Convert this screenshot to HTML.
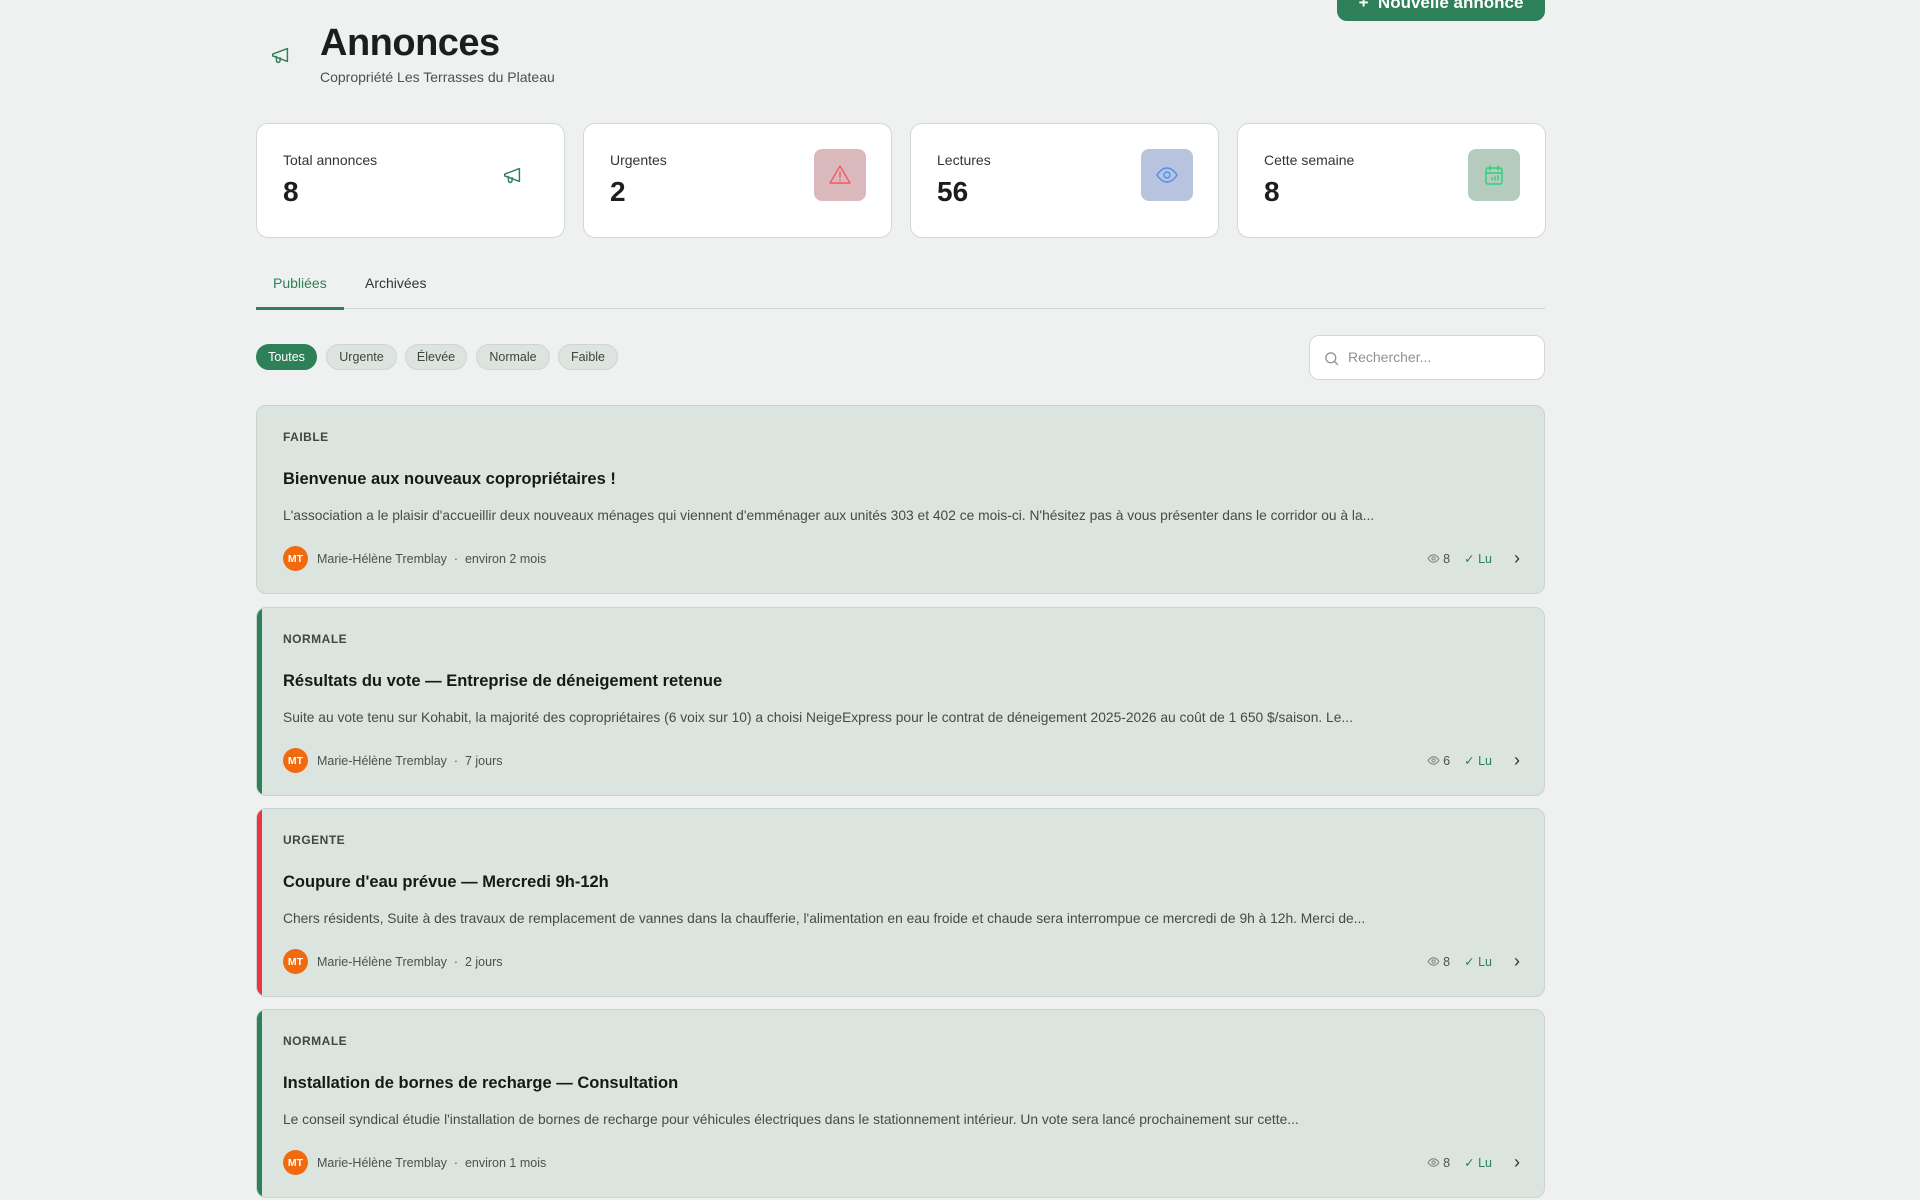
<!DOCTYPE html>
<html><head><meta charset="utf-8"><style>
*{box-sizing:border-box;margin:0;padding:0}
body{width:1920px;height:1200px;overflow:hidden;background:#eff1f0;font-family:"Liberation Sans",sans-serif;color:#1a1f1c;position:relative}
.abs{position:absolute}
.btn{left:1337px;top:-20px;width:208px;height:41px;background:#2e8059;border-radius:10px;color:#fff;font-weight:bold;font-size:17px;display:flex;align-items:flex-end;justify-content:center;padding-bottom:8px}
h1{position:absolute;left:320px;top:22px;font-size:38px;font-weight:bold;letter-spacing:-0.5px}
.sub{left:320px;top:69px;font-size:14px;color:#4a524d}
.card{position:absolute;top:123px;width:309px;height:115px;background:#fff;border:1px solid #d3d8d5;border-radius:12px}
.card .l{position:absolute;left:26px;top:28px;font-size:14px;color:#2f3632}
.card .n{position:absolute;left:26px;top:52px;font-size:28px;font-weight:bold}
.card .ic{position:absolute;left:230px;top:25px;width:52px;height:52px;border-radius:8px;display:flex;align-items:center;justify-content:center}
.tabs{left:256px;top:308px;width:1289px;height:1px;background:#cfd5d2}
.tab{top:275px;font-size:14px}
.chip{top:344px;height:26px;border-radius:13px;background:#dde3df;border:1px solid #cfd6d2;font-size:12.5px;color:#3d4540;display:flex;align-items:center;justify-content:center}
.search{position:absolute;left:1309px;top:335px;width:236px;height:45px;background:#fff;border:1px solid #d3d8d5;border-radius:10px}
.ann{position:absolute;left:256px;width:1289px;height:189px;background:#dce4df;border:1px solid #cbd3ce;border-radius:10px;overflow:hidden}
.ann .bar{position:absolute;left:0;top:0;bottom:0;width:5px}
.ann .p{position:absolute;left:26px;top:24px;font-size:12px;letter-spacing:.5px;color:#3f4742;font-weight:bold}
.ann .t{position:absolute;left:26px;top:64px;font-size:16.5px;font-weight:bold;color:#151a17}
.ann .e{position:absolute;left:26px;top:102px;font-size:13.8px;color:#444c47;white-space:nowrap}
.ann .m{position:absolute;left:26px;top:140px;display:flex;align-items:center;font-size:12.5px;color:#4a524d}
.av{width:25px;height:25px;border-radius:50%;background:#f26a0f;color:#fff;font-size:10.5px;font-weight:bold;display:flex;align-items:center;justify-content:center;margin-right:9px}
.ann .r{position:absolute;right:24px;top:140px;height:25px;display:flex;align-items:center;font-size:12.5px;color:#4a524d}
</style></head><body>
<div class="abs btn">+&nbsp; Nouvelle annonce</div>
<svg class="abs" style="left:270px;top:44px" width="22" height="22" viewBox="0 0 24 24" fill="none" stroke="#2e8059" stroke-width="1.6" stroke-linecap="round" stroke-linejoin="round"><path d="M3 11l16-6v14L3 13z"/><path d="M3 11v2"/><path d="M7 13.5V18a2 2 0 0 0 4 0v-3"/></svg>
<h1>Annonces</h1>
<div class="abs sub">Copropriété Les Terrasses du Plateau</div>

<div class="card" style="left:256px"><div class="l">Total annonces</div><div class="n">8</div><div class="ic"><svg width="22" height="22" viewBox="0 0 24 24" fill="none" stroke="#2e8059" stroke-width="1.6" stroke-linecap="round" stroke-linejoin="round"><path d="M3 11l16-6v14L3 13z"/><path d="M7 13.5V18a2 2 0 0 0 4 0v-3"/></svg></div></div>
<div class="card" style="left:583px"><div class="l">Urgentes</div><div class="n">2</div><div class="ic" style="background:#dbb8bb"><svg width="24" height="24" viewBox="0 0 24 24" fill="none" stroke="#ef5b63" stroke-width="1.4" stroke-linecap="round" stroke-linejoin="round"><path d="M12 3L2 20h20z"/><path d="M12 9v5M12 17v.5"/></svg></div></div>
<div class="card" style="left:910px"><div class="l">Lectures</div><div class="n">56</div><div class="ic" style="background:#b8c3de"><svg width="24" height="24" viewBox="0 0 24 24" fill="none" stroke="#4f8ff5" stroke-width="1.4"><path d="M2 12s4-7 10-7 10 7 10 7-4 7-10 7S2 12 2 12z"/><circle cx="12" cy="12" r="3"/></svg></div></div>
<div class="card" style="left:1237px"><div class="l">Cette semaine</div><div class="n">8</div><div class="ic" style="background:#b5cbbe"><svg width="24" height="24" viewBox="0 0 24 24" fill="none" stroke="#2fcf7a" stroke-width="1.4" stroke-linecap="round"><rect x="4" y="5" width="16" height="16" rx="2"/><path d="M4 10h16M8 3v4M16 3v4M10 15v2M13 14v3M16 13v4"/></svg></div></div>

<div class="abs tab" style="left:273px;color:#2e8059">Publiées</div>
<div class="abs tab" style="left:365px;color:#2f3632">Archivées</div>
<div class="abs tabs"></div>
<div class="abs" style="left:256px;top:307px;width:88px;height:3px;background:#2e8059"></div>

<div class="abs chip" style="left:256px;width:61px;background:#2e8059;border-color:#2e8059;color:#fff">Toutes</div>
<div class="abs chip" style="left:326px;width:71px">Urgente</div>
<div class="abs chip" style="left:405px;width:62px">Élevée</div>
<div class="abs chip" style="left:476px;width:74px">Normale</div>
<div class="abs chip" style="left:558px;width:60px">Faible</div>

<div class="search"><svg class="abs" style="left:13px;top:14px" width="17" height="17" viewBox="0 0 24 24" fill="none" stroke="#8a918d" stroke-width="1.8"><circle cx="11" cy="11" r="7"/><path d="M16 16l5 5"/></svg><div class="abs" style="left:38px;top:13px;font-size:14px;color:#8d948f">Rechercher...</div></div>

<div class="ann" style="top:405px"><div class="p">FAIBLE</div><div class="t">Bienvenue aux nouveaux copropriétaires !</div><div class="e">L'association a le plaisir d'accueillir deux nouveaux ménages qui viennent d'emménager aux unités 303 et 402 ce mois-ci. N'hésitez pas à vous présenter dans le corridor ou à la...</div><div class="m"><div class="av">MT</div>Marie-Hélène Tremblay&nbsp;&nbsp;·&nbsp;&nbsp;environ 2 mois</div><div class="r"><svg width="13" height="13" viewBox="0 0 24 24" fill="none" stroke="#7a827d" stroke-width="1.8"><path d="M2 12s4-7 10-7 10 7 10 7-4 7-10 7S2 12 2 12z"/><circle cx="12" cy="12" r="3"/></svg>&nbsp;8<span style="color:#2e8059;margin-left:14px">✓ Lu</span><span style="margin-left:22px;font-size:18px;color:#333">›</span></div></div>

<div class="ann" style="top:607px"><div class="bar" style="background:#2e8059"></div><div class="p">NORMALE</div><div class="t">Résultats du vote — Entreprise de déneigement retenue</div><div class="e">Suite au vote tenu sur Kohabit, la majorité des copropriétaires (6 voix sur 10) a choisi NeigeExpress pour le contrat de déneigement 2025-2026 au coût de 1 650 $/saison. Le...</div><div class="m"><div class="av">MT</div>Marie-Hélène Tremblay&nbsp;&nbsp;·&nbsp;&nbsp;7 jours</div><div class="r"><svg width="13" height="13" viewBox="0 0 24 24" fill="none" stroke="#7a827d" stroke-width="1.8"><path d="M2 12s4-7 10-7 10 7 10 7-4 7-10 7S2 12 2 12z"/><circle cx="12" cy="12" r="3"/></svg>&nbsp;6<span style="color:#2e8059;margin-left:14px">✓ Lu</span><span style="margin-left:22px;font-size:18px;color:#333">›</span></div></div>

<div class="ann" style="top:808px"><div class="bar" style="background:#ef3340"></div><div class="p">URGENTE</div><div class="t">Coupure d'eau prévue — Mercredi 9h-12h</div><div class="e">Chers résidents, Suite à des travaux de remplacement de vannes dans la chaufferie, l'alimentation en eau froide et chaude sera interrompue ce mercredi de 9h à 12h. Merci de...</div><div class="m"><div class="av">MT</div>Marie-Hélène Tremblay&nbsp;&nbsp;·&nbsp;&nbsp;2 jours</div><div class="r"><svg width="13" height="13" viewBox="0 0 24 24" fill="none" stroke="#7a827d" stroke-width="1.8"><path d="M2 12s4-7 10-7 10 7 10 7-4 7-10 7S2 12 2 12z"/><circle cx="12" cy="12" r="3"/></svg>&nbsp;8<span style="color:#2e8059;margin-left:14px">✓ Lu</span><span style="margin-left:22px;font-size:18px;color:#333">›</span></div></div>

<div class="ann" style="top:1009px"><div class="bar" style="background:#2e8059"></div><div class="p">NORMALE</div><div class="t">Installation de bornes de recharge — Consultation</div><div class="e">Le conseil syndical étudie l'installation de bornes de recharge pour véhicules électriques dans le stationnement intérieur. Un vote sera lancé prochainement sur cette...</div><div class="m"><div class="av">MT</div>Marie-Hélène Tremblay&nbsp;&nbsp;·&nbsp;&nbsp;environ 1 mois</div><div class="r"><svg width="13" height="13" viewBox="0 0 24 24" fill="none" stroke="#7a827d" stroke-width="1.8"><path d="M2 12s4-7 10-7 10 7 10 7-4 7-10 7S2 12 2 12z"/><circle cx="12" cy="12" r="3"/></svg>&nbsp;8<span style="color:#2e8059;margin-left:14px">✓ Lu</span><span style="margin-left:22px;font-size:18px;color:#333">›</span></div></div>
</body></html>
